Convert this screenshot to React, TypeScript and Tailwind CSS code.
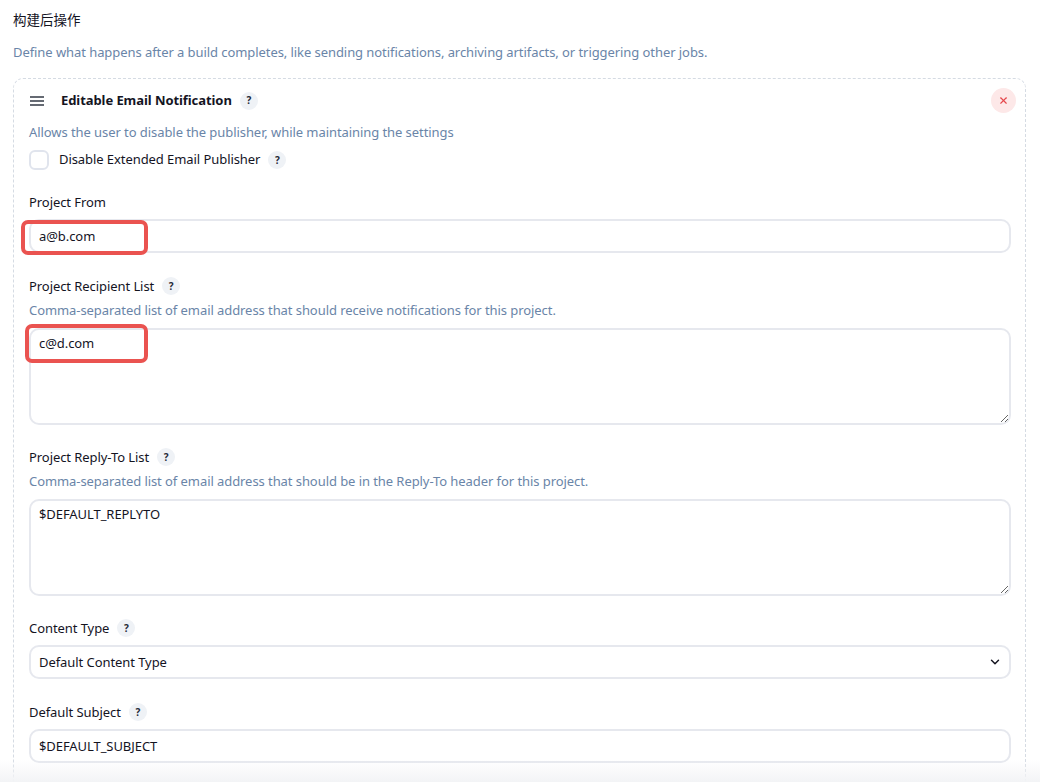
import React from 'react';
import { ChevronDown, X } from 'lucide-react';

const font = "font-['Noto_Sans','Noto_Sans_CJK_SC',sans-serif]";

function HelpBadge() {
  return (
    <span className="ml-[8px] flex h-[18px] w-[18px] shrink-0 items-center justify-center rounded-full bg-[#eff2f6] text-[10px] font-bold text-[#1f2937]">
      ?
    </span>
  );
}

function Label({ text, help = true }: { text: string; help?: boolean }) {
  return (
    <div className="flex h-[20px] items-center text-[13px] leading-[20px] tracking-[-0.07px] text-[#14141f]">
      <span>{text}</span>
      {help && <HelpBadge />}
    </div>
  );
}

function Desc({ text }: { text: string }) {
  return <div className="text-[13px] leading-[20px] tracking-[-0.07px] text-[#6a85a8]">{text}</div>;
}

const fieldBox =
  'block w-full rounded-[10px] border-2 border-[#e6e8ee] bg-white px-[8px] text-[13px] tracking-[-0.07px] text-[#14141f] outline-none';

function TextField({ value }: { value: string }) {
  return <input readOnly value={value} className={`${fieldBox} mt-[7px] h-[34px]`} />;
}

function AreaField({ value }: { value: string }) {
  return (
    <textarea
      readOnly
      value={value}
      className={`${fieldBox} mt-[8px] h-[97px] resize-y py-[3px] leading-[20px]`}
    />
  );
}

export default function App() {
  return (
    <div className={`${font} relative h-[782px] w-[1040px] overflow-hidden bg-white px-[13px]`}>
      <div className="pt-[10px] text-[13.5px] leading-[20px] text-[#14141f]">构建后操作</div>
      <div className="mt-[12px] text-[13px] leading-[20px] tracking-[-0.07px] text-[#6a85a8]">
        Define what happens after a build completes, like sending notifications, archiving artifacts, or triggering other jobs.
      </div>

      <div className="mt-[16px] w-[1013px] rounded-t-[10px] border border-dashed border-[#d5dbe3] pb-[40px] pl-[15px] pr-[14px]">
        <div className="flex h-[42px] items-center pt-[1px]">
          <svg width="16" height="10" viewBox="0 0 16 10" className="shrink-0">
            <path d="M1 1h14M1 5h14M1 9h14" stroke="#333a45" strokeWidth="1.5" fill="none" />
          </svg>
          <span className="ml-[16px] text-[13px] font-bold tracking-[-0.07px] text-[#14141f]">Editable Email Notification</span>
          <HelpBadge />
          <button className="ml-auto mr-[-5px] flex h-[25px] w-[25px] items-center justify-center rounded-full bg-[#fde8e8] text-[#e5484d]">
            <X size={11} strokeWidth={2.5} />
          </button>
        </div>

        <div className="mt-[1px]">
          <Desc text="Allows the user to disable the publisher, while maintaining the settings" />
        </div>
        <div className="mt-[6px] flex h-[24px] items-center">
          <span className="h-[20px] w-[20px] rounded-[6px] border-2 border-[#e0e4ed] bg-white" />
          <span className="ml-[10px] text-[13px] tracking-[-0.07px] text-[#14141f]">Disable Extended Email Publisher</span>
          <HelpBadge />
        </div>

        <div className="mt-[20px]">
          <Label text="Project From" help={false} />
          <TextField value="a@b.com" />
        </div>

        <div className="mt-[23px]">
          <Label text="Project Recipient List" />
          <div className="mt-[4px]">
            <Desc text="Comma-separated list of email address that should receive notifications for this project." />
          </div>
          <AreaField value="c@d.com" />
        </div>

        <div className="mt-[22px]">
          <Label text="Project Reply-To List" />
          <div className="mt-[4px]">
            <Desc text="Comma-separated list of email address that should be in the Reply-To header for this project." />
          </div>
          <AreaField value="$DEFAULT_REPLYTO" />
        </div>

        <div className="mt-[22px]">
          <Label text="Content Type" />
          <div className="relative mt-[7px]">
            <select className={`${fieldBox} h-[34px] appearance-none pt-[1px]`} defaultValue="default">
              <option value="default">Default Content Type</option>
            </select>
            <ChevronDown size={14} strokeWidth={2.5} className="absolute right-[9px] top-[10px] text-[#14141f]" />
          </div>
        </div>

        <div className="mt-[23px]">
          <Label text="Default Subject" />
          <TextField value="$DEFAULT_SUBJECT" />
        </div>
      </div>

      {/* annotation boxes drawn over the screenshot */}
      <div className="absolute left-[21px] top-[220px] h-[35px] w-[127px] rounded-[7px] border-[4px] border-[#ea5350]" />
      <div className="absolute left-[25px] top-[324px] h-[39px] w-[123px] rounded-[7px] border-[4px] border-[#ea5350]" />

      {/* fade at the bottom edge */}
      <div className="absolute bottom-0 left-0 h-[22px] w-full bg-gradient-to-b from-transparent to-[#f3f4f6]" />
    </div>
  );
}
